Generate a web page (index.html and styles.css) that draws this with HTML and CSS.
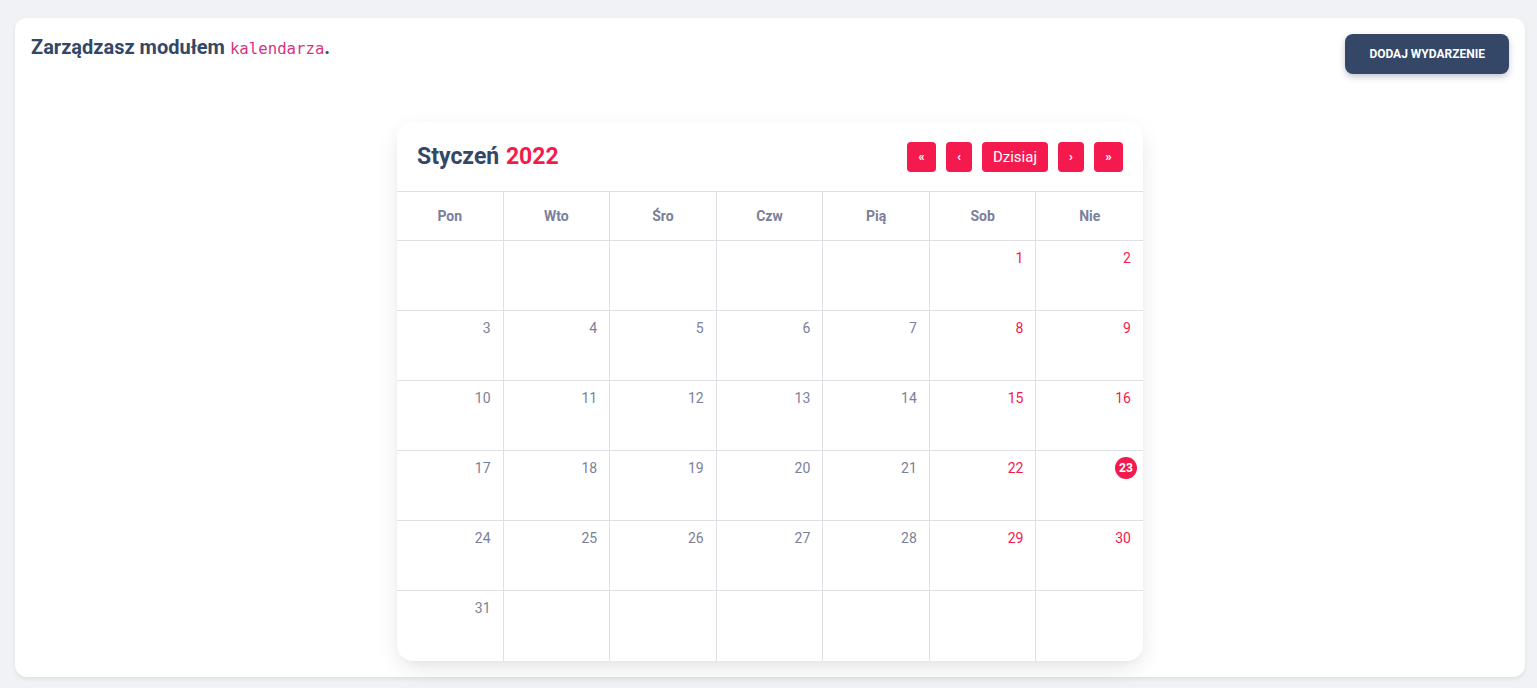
FILE: index.html
```html
<!DOCTYPE html>
<html lang="pl">
    <head>
        <meta charset="UTF-8">
        <title>Kalendarz</title>
        <link rel="stylesheet" href="styles.css">
    </head>

    <body class="page">
        <main class="panel">
            <header class="panel__header">
                <h1 class="panel__header__title">Zarządzasz modułem <code class="panel__header__code">kalendarza</code>.</h1>
                <button class="panel__header__button">Dodaj wydarzenie</button>
            </header>

            <section class="calendar">
                <header class="calendar__toolbar">
                    <h2 class="calendar__toolbar__title">Styczeń <span class="calendar__toolbar__year">2022</span></h2>
                    <nav class="calendar__toolbar__nav">
                        <button class="calendar__toolbar__btn calendar__toolbar__btn--double">&laquo;</button>
                        <button class="calendar__toolbar__btn calendar__toolbar__btn--single">&lsaquo;</button>
                        <button class="calendar__toolbar__btn">Dzisiaj</button>
                        <button class="calendar__toolbar__btn calendar__toolbar__btn--single">&rsaquo;</button>
                        <button class="calendar__toolbar__btn calendar__toolbar__btn--double">&raquo;</button>
                    </nav>
                </header>

                <div class="calendar__grid">
                    <div class="calendar__dayname">Pon</div>
                    <div class="calendar__dayname">Wto</div>
                    <div class="calendar__dayname">Śro</div>
                    <div class="calendar__dayname">Czw</div>
                    <div class="calendar__dayname">Pią</div>
                    <div class="calendar__dayname">Sob</div>
                    <div class="calendar__dayname">Nie</div>

                    <div class="calendar__cell"></div>
                    <div class="calendar__cell"></div>
                    <div class="calendar__cell"></div>
                    <div class="calendar__cell"></div>
                    <div class="calendar__cell"></div>
                    <div class="calendar__cell calendar__cell--weekend"><span class="calendar__cell__num">1</span></div>
                    <div class="calendar__cell calendar__cell--weekend"><span class="calendar__cell__num">2</span></div>

                    <div class="calendar__cell"><span class="calendar__cell__num">3</span></div>
                    <div class="calendar__cell"><span class="calendar__cell__num">4</span></div>
                    <div class="calendar__cell"><span class="calendar__cell__num">5</span></div>
                    <div class="calendar__cell"><span class="calendar__cell__num">6</span></div>
                    <div class="calendar__cell"><span class="calendar__cell__num">7</span></div>
                    <div class="calendar__cell calendar__cell--weekend"><span class="calendar__cell__num">8</span></div>
                    <div class="calendar__cell calendar__cell--weekend"><span class="calendar__cell__num">9</span></div>

                    <div class="calendar__cell"><span class="calendar__cell__num">10</span></div>
                    <div class="calendar__cell"><span class="calendar__cell__num">11</span></div>
                    <div class="calendar__cell"><span class="calendar__cell__num">12</span></div>
                    <div class="calendar__cell"><span class="calendar__cell__num">13</span></div>
                    <div class="calendar__cell"><span class="calendar__cell__num">14</span></div>
                    <div class="calendar__cell calendar__cell--weekend"><span class="calendar__cell__num">15</span></div>
                    <div class="calendar__cell calendar__cell--weekend"><span class="calendar__cell__num">16</span></div>

                    <div class="calendar__cell"><span class="calendar__cell__num">17</span></div>
                    <div class="calendar__cell"><span class="calendar__cell__num">18</span></div>
                    <div class="calendar__cell"><span class="calendar__cell__num">19</span></div>
                    <div class="calendar__cell"><span class="calendar__cell__num">20</span></div>
                    <div class="calendar__cell"><span class="calendar__cell__num">21</span></div>
                    <div class="calendar__cell calendar__cell--weekend"><span class="calendar__cell__num">22</span></div>
                    <div class="calendar__cell calendar__cell--weekend"><span class="calendar__cell__num calendar__cell__num--today">23</span></div>

                    <div class="calendar__cell"><span class="calendar__cell__num">24</span></div>
                    <div class="calendar__cell"><span class="calendar__cell__num">25</span></div>
                    <div class="calendar__cell"><span class="calendar__cell__num">26</span></div>
                    <div class="calendar__cell"><span class="calendar__cell__num">27</span></div>
                    <div class="calendar__cell"><span class="calendar__cell__num">28</span></div>
                    <div class="calendar__cell calendar__cell--weekend"><span class="calendar__cell__num">29</span></div>
                    <div class="calendar__cell calendar__cell--weekend"><span class="calendar__cell__num">30</span></div>

                    <div class="calendar__cell"><span class="calendar__cell__num">31</span></div>
                    <div class="calendar__cell"></div>
                    <div class="calendar__cell"></div>
                    <div class="calendar__cell"></div>
                    <div class="calendar__cell"></div>
                    <div class="calendar__cell"></div>
                    <div class="calendar__cell"></div>
                </div>
            </section>
        </main>
    </body>
</html>
```

FILE: styles.css
```css
html,
body {
    border: none;
    margin: 0;
    padding: 0;
}

:root {
    --color-bg: #f0f2f5;
    --color-dark: #344767;
    --color-text: #7b809a;
    --color-accent: #f41a4d;
    --color-code: #d63384;
    --color-line: #dfe0e5;
}

.page {
    background-color: var(--color-bg);
    font-family: Roboto, "Noto Sans", sans-serif;
    padding: 18px 12px 12px 15px;
}

.panel {
    background-color: #ffffff;
    border-radius: 12px;
    box-shadow: 0 2px 4px rgba(0, 0, 0, 0.08);
    padding: 16px;
}

.panel__header {
    align-items: flex-start;
    display: flex;
    justify-content: space-between;
}

.panel__header__title {
    color: var(--color-dark);
    font-size: 20px;
    font-weight: 700;
    line-height: 27px;
    margin: 0;
}

.panel__header__code {
    color: var(--color-code);
    font-family: "DejaVu Sans Mono", "Liberation Mono", monospace;
    font-size: 15.7px;
    font-weight: 400;
}

.panel__header__button {
    background-color: var(--color-dark);
    border: none;
    border-radius: 8px;
    box-shadow: 0 3px 6px rgba(52, 71, 103, 0.3);
    color: #ffffff;
    font-family: inherit;
    font-size: 12px;
    font-weight: 700;
    height: 40px;
    padding: 0 24px;
    text-transform: uppercase;
    white-space: nowrap;
}

.calendar {
    background-color: #ffffff;
    border-radius: 16px;
    box-shadow: 0 8px 26px -4px rgba(20, 20, 20, 0.12), 0 4px 10px -6px rgba(20, 20, 20, 0.1);
    margin: 48px auto 0 auto;
    overflow: hidden;
    width: 746px;
}

.calendar__toolbar {
    align-items: center;
    border-bottom: 1px solid var(--color-line);
    display: flex;
    height: 69px;
    justify-content: space-between;
    padding: 0 20px;
}

.calendar__toolbar__title {
    color: var(--color-dark);
    font-size: 23px;
    font-weight: 700;
    margin: 0;
    word-spacing: 1px;
}

.calendar__toolbar__year {
    color: var(--color-accent);
}

.calendar__toolbar__nav {
    display: flex;
    gap: 10px;
}

.calendar__toolbar__btn {
    background-color: var(--color-accent);
    border: none;
    border-radius: 4px;
    color: #ffffff;
    font-family: inherit;
    font-size: 15px;
    font-weight: 400;
    height: 30px;
    padding: 0 11px;
}

.calendar__toolbar__btn--double,
.calendar__toolbar__btn--single {
    font-size: 13px;
    font-weight: 700;
    padding: 0;
}

.calendar__toolbar__btn--double {
    width: 29px;
}

.calendar__toolbar__btn--single {
    width: 26px;
}

.calendar__grid {
    display: grid;
    grid-template-columns: repeat(7, 1fr);
    grid-template-rows: 49px repeat(6, 70px);
}

.calendar__dayname,
.calendar__cell {
    border-bottom: 1px solid var(--color-line);
    border-right: 1px solid var(--color-line);
}

.calendar__dayname:nth-child(7n),
.calendar__cell:nth-child(7n) {
    border-right: none;
}

.calendar__cell:nth-last-child(-n+7) {
    border-bottom: none;
}

.calendar__dayname {
    align-items: center;
    color: var(--color-text);
    display: flex;
    font-size: 14px;
    font-weight: 700;
    justify-content: center;
}

.calendar__cell {
    color: var(--color-text);
    display: flex;
    font-size: 14px;
    justify-content: flex-end;
    padding: 6px;
}

.calendar__cell--weekend {
    color: var(--color-accent);
}

.calendar__cell__num {
    height: 22px;
    line-height: 22px;
    padding: 0 6px;
}

.calendar__cell__num--today {
    background-color: var(--color-accent);
    border-radius: 50%;
    color: #ffffff;
    font-size: 12px;
    font-weight: 700;
    padding: 0;
    text-align: center;
    width: 22px;
}
```
